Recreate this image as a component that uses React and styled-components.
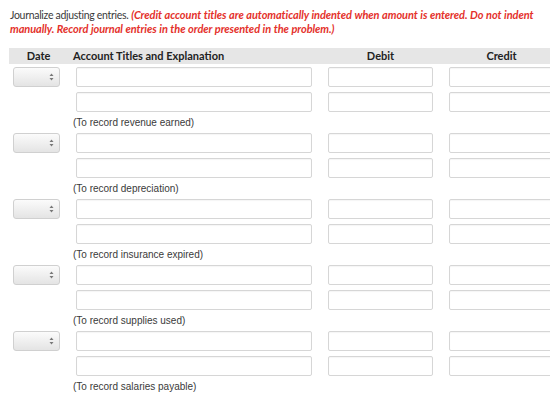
import styled, { createGlobalStyle } from "styled-components";

const GlobalStyle = createGlobalStyle`
    body {
        margin: 0;
        background: #ffffff;
        font-family: Lato, "Liberation Sans", sans-serif;
    }
`;

const Page = styled.div`
    width: 560px;
    height: 416px;
    overflow: hidden;
    padding: 8px 0 0 10px;
    box-sizing: border-box;
`;

const Instructions = styled.p`
    margin: 0 0 12px 0;
    width: 545px;
    font-size: 11px;
    line-height: 14px;
    color: #333;
`;

const Lead = styled.span`
    font-size: 10.5px;
    letter-spacing: -0.3px;
    color: #3a3a3a;
`;

const Warning = styled.span`
    color: #e4312b;
    font-style: italic;
    font-weight: 700;
    letter-spacing: -0.08px;
    word-spacing: 0.3px;
`;

const Sheet = styled.div`
    width: 541px;
    margin-left: -1px;
    overflow: hidden;
`;

const Grid = styled.div`
    width: 553px;
    display: grid;
    grid-template-columns: 59px 252px 121px 121px;
`;

const HeadCell = styled.div`
    height: 16px;
    background: #e6e6e6;
    font-size: 11px;
    font-weight: 700;
    line-height: 16px;
    color: #222;
    text-align: ${(p) => (p.$left ? "left" : "center")};
    padding-left: ${(p) => (p.$left ? "5px" : "0")};
    margin-bottom: 3px;
`;

const Cell = styled.div`
    height: 20px;
    margin-bottom: 5px;
    display: flex;
    justify-content: ${(p) => (p.$left ? "flex-start" : "center")};
    padding-left: ${(p) => p.$pad || "0"};
`;

const Note = styled.div`
    grid-column: 2 / -1;
    padding-left: 5px;
    margin-top: -1px;
    height: 17px;
    font-family: "Liberation Sans", Arial, sans-serif;
    font-size: 10px;
    line-height: 13px;
    color: #3a3a3a;
`;

const Field = styled.div`
    width: ${(p) => p.$w}px;
    height: 20px;
    box-sizing: border-box;
    border: 1px solid #d6d6d6;
    border-radius: 2px;
    background: #fff;
    box-shadow: inset 0 1px 1px rgba(0, 0, 0, 0.04);
`;

const Select = styled.div`
    width: 47px;
    height: 20px;
    box-sizing: border-box;
    border: 1px solid #d0d0d0;
    border-radius: 3px;
    background: linear-gradient(#fbfbfb, #e4e4e4);
    display: flex;
    align-items: center;
    justify-content: flex-end;
    padding-right: 5px;
`;

function Arrows() {
    return (
        <svg width="5" height="8" viewBox="0 0 5 8">
            <path d="M2.5 0.5 L4.5 3 L0.5 3 Z" fill="#777" />
            <path d="M2.5 7.5 L4.5 5 L0.5 5 Z" fill="#777" />
        </svg>
    );
}

const notes = [
    "(To record revenue earned)",
    "(To record depreciation)",
    "(To record insurance expired)",
    "(To record supplies used)",
    "(To record salaries payable)",
];

function Entry({ note }) {
    return (
        <>
            <Cell $left $pad="4px">
                <Select>
                    <Arrows />
                </Select>
            </Cell>
            <Cell $left $pad="8px">
                <Field $w={236} />
            </Cell>
            <Cell>
                <Field $w={105} />
            </Cell>
            <Cell>
                <Field $w={105} />
            </Cell>
            <Cell />
            <Cell $left $pad="8px">
                <Field $w={236} />
            </Cell>
            <Cell>
                <Field $w={105} />
            </Cell>
            <Cell>
                <Field $w={105} />
            </Cell>
            <Note>{note}</Note>
        </>
    );
}

export default function App() {
    return (
        <Page>
            <GlobalStyle />
            <Instructions>
                <Lead>Journalize adjusting entries.</Lead>{" "}
                <Warning>
                    (Credit account titles are automatically indented when amount is
                    entered. Do not indent manually. Record journal entries in the order
                    presented in the problem.)
                </Warning>
            </Instructions>
            <Sheet>
                <Grid>
                    <HeadCell>Date</HeadCell>
                    <HeadCell $left>Account Titles and Explanation</HeadCell>
                    <HeadCell>Debit</HeadCell>
                    <HeadCell>Credit</HeadCell>
                    {notes.map((n) => (
                        <Entry key={n} note={n} />
                    ))}
                </Grid>
            </Sheet>
        </Page>
    );
}
